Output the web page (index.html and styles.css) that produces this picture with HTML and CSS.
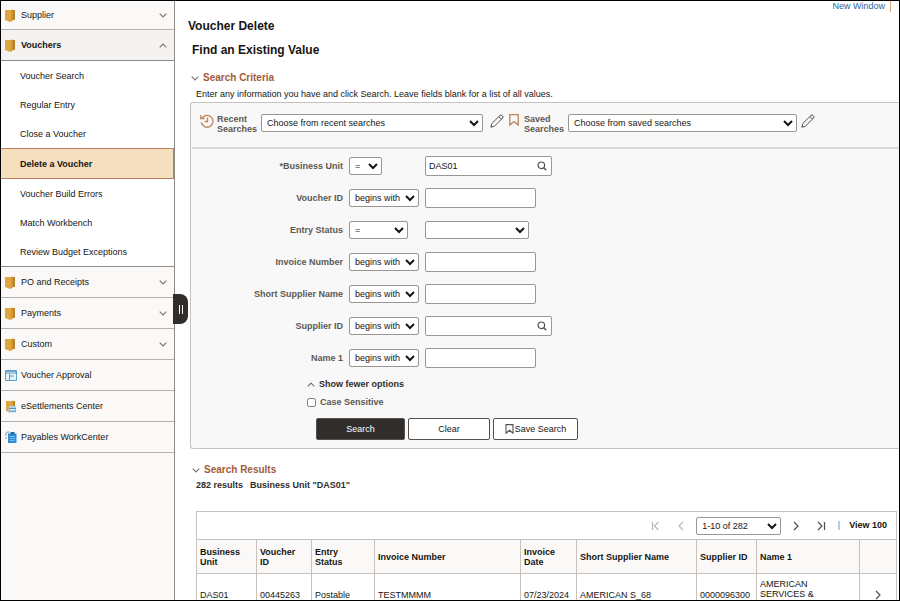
FILE: index.html
```html
<!DOCTYPE html>
<html lang="en">
<head>
  <meta charset="UTF-8">
  <meta name="viewport" content="width=device-width, initial-scale=1.0">
  <title>Voucher Delete</title>
  <link rel="stylesheet" href="styles.css">
</head>
<body>
  <!-- Shared icons -->
  <svg class="sprite" aria-hidden="true">
    <symbol id="folder" viewBox="0 0 10 13">
      <path d="M0 1h10v10H0z" fill="#b9842f"/>
      <path d="M0 1h6.500l1-1v12l-2.500 1-5-2z" fill="#dfa53f"/>
      <path d="M6.500 1l1-.5v11l-1 .5z" fill="#c79039"/>
    </symbol>
    <symbol id="down" viewBox="0 0 8 5">
      <path d="M.7.7L4 4 7.300.7" fill="none" stroke="#777370" stroke-width="1.100"/>
    </symbol>
    <symbol id="up" viewBox="0 0 8 5">
      <path d="M.7 4.300L4 1l3.300 3.300" fill="none" stroke="#777370" stroke-width="1.100"/>
    </symbol>
    <symbol id="pencil" viewBox="0 0 14 14">
      <path d="M.8 13.200l.9-3.500L10 1.400q1-.9 2 0l.6.6q.9 1 0 2L4.300 12.300zM9 2.700l2.300 2.300" fill="none" stroke="#54504d" stroke-width="1" stroke-linejoin="round"/>
    </symbol>
    <symbol id="bookmark" viewBox="0 0 10 12">
      <path d="M.8.7h8.400v10.400L5 7.500.8 11.100z" fill="none" stroke="currentColor" stroke-width="1.300"/>
    </symbol>
    <symbol id="lens" viewBox="0 0 10 10">
      <circle cx="4.300" cy="4.300" r="3.300" fill="none" stroke="#55514e" stroke-width="1.200"/>
      <path d="M6.700 6.700L9.300 9.300" stroke="#55514e" stroke-width="1.400"/>
    </symbol>
  </svg>

  <div class="page">
    <nav class="sidebar">
      <a class="group" href="#"><svg class="folder"><use href="#folder"/></svg>Supplier<svg class="chevron"><use href="#down"/></svg></a>
      <a class="group expanded" href="#"><svg class="folder"><use href="#folder"/></svg>Vouchers<svg class="chevron"><use href="#up"/></svg></a>
      <div class="submenu">
        <a href="#">Voucher Search</a>
        <a href="#">Regular Entry</a>
        <a href="#">Close a Voucher</a>
        <a class="selected" href="#">Delete a Voucher</a>
        <a href="#">Voucher Build Errors</a>
        <a href="#">Match Workbench</a>
        <a href="#">Review Budget Exceptions</a>
      </div>
      <a class="group" href="#"><svg class="folder"><use href="#folder"/></svg>PO and Receipts<svg class="chevron"><use href="#down"/></svg></a>
      <a class="group" href="#"><svg class="folder"><use href="#folder"/></svg>Payments<svg class="chevron"><use href="#down"/></svg></a>
      <a class="group" href="#"><svg class="folder"><use href="#folder"/></svg>Custom<svg class="chevron"><use href="#down"/></svg></a>
      <a class="group" href="#">
        <svg class="app-icon" viewBox="0 0 12 12"><path d="M.5 1h11v10H.5z" fill="#e6f2fa" stroke="#5b9fc9"/><path d="M1 1.500h10V4H1z" fill="#5b9fc9"/><path d="M4.500 4v7M5 6.500h4" stroke="#5b9fc9"/><path d="M1.500 2.700h9" stroke="#d3e8f5" stroke-width=".8"/></svg>
        Voucher Approval</a>
      <a class="group" href="#">
        <svg class="app-icon" viewBox="0 0 12 13"><path d="M1 1h9v10H1z" fill="#b9842f"/><path d="M1 1h6l1-1v11l-3 1.500-4-1.500z" fill="#dfa53f"/><path d="M4 6h7v6.500H3z" fill="#a9d2ea"/><path d="M4 8.500h7M4 11h7" stroke="#4d90bd"/><path d="M5 9.700h5" stroke="#fff"/></svg>
        eSettlements Center</a>
      <a class="group" href="#">
        <svg class="app-icon" viewBox="0 0 12 13"><path d="M3 2.500h8.500V12H3z" fill="#2f8fd6"/><path d="M5.500 1h4v2.500h-4z" fill="#1f6fae"/><path d="M4.800 5.500h5M4.800 7.500h5M4.800 9.500h5" stroke="#8cc6f0" stroke-width=".8"/><path d="M1 5V2.500Q1 1 3 1h1.500M1 6v2" fill="none" stroke="#7a98ab"/></svg>
        Payables WorkCenter</a>
      <button class="handle" type="button" aria-label="Collapse navigation"><span></span><span></span></button>
    </nav>

    <main>
      <div class="top-links"><a href="#">New Window</a></div>
      <h1>Voucher Delete</h1>
      <h2>Find an Existing Value</h2>

      <h3 class="criteria-title"><svg class="chevron"><use href="#down"/></svg>Search Criteria</h3>
      <p class="hint">Enter any information you have and click Search. Leave fields blank for a list of all values.</p>

      <form class="panel">
        <div class="searches">
          <svg class="history" viewBox="0 0 14 14"><path d="M2.200 4A5.900 5.900 0 1 1 1.300 8.500M.8 1v3.500h3.700M7.500 3.500v4H4.700" fill="none" stroke="#c08457" stroke-width="1.300"/></svg>
          <label for="recent">Recent<br>Searches</label>
          <select id="recent" class="recent"><option>Choose from recent searches</option></select>
          <button class="icon-button" type="button" aria-label="Edit recent searches"><svg><use href="#pencil"/></svg></button>
          <svg class="saved-icon"><use href="#bookmark"/></svg>
          <label for="saved">Saved<br>Searches</label>
          <select id="saved" class="saved"><option>Choose from saved searches</option></select>
          <button class="icon-button" type="button" aria-label="Edit saved searches"><svg><use href="#pencil"/></svg></button>
        </div>

        <div class="fields">
          <label for="unit">*Business Unit</label>
          <select class="op-small" aria-label="Business Unit operator"><option>=</option></select>
          <div class="lookup">
            <input id="unit" type="text" value="DAS01">
            <button type="button" aria-label="Look up Business Unit"><svg><use href="#lens"/></svg></button>
          </div>

          <label for="voucher">Voucher ID</label>
          <select aria-label="Voucher ID operator"><option>begins with</option></select>
          <input id="voucher" type="text">

          <label for="status">Entry Status</label>
          <select class="op-medium" aria-label="Entry Status operator"><option>=</option></select>
          <select id="status" class="status"><option></option></select>

          <label for="invoice">Invoice Number</label>
          <select aria-label="Invoice Number operator"><option>begins with</option></select>
          <input id="invoice" type="text">

          <label for="short-name">Short Supplier Name</label>
          <select aria-label="Short Supplier Name operator"><option>begins with</option></select>
          <input id="short-name" type="text">

          <label for="supplier">Supplier ID</label>
          <select aria-label="Supplier ID operator"><option>begins with</option></select>
          <div class="lookup">
            <input id="supplier" type="text">
            <button type="button" aria-label="Look up Supplier ID"><svg><use href="#lens"/></svg></button>
          </div>

          <label for="name1">Name 1</label>
          <select aria-label="Name 1 operator"><option>begins with</option></select>
          <input id="name1" type="text">
        </div>

        <div class="options">
          <a class="fewer" href="#"><svg class="chevron"><use href="#up"/></svg>Show fewer options</a>
          <label class="case"><input type="checkbox">Case Sensitive</label>
        </div>

        <div class="actions">
          <button class="btn primary" type="button">Search</button>
          <button class="btn clear" type="button">Clear</button>
          <button class="btn save" type="button"><svg><use href="#bookmark"/></svg>Save Search</button>
        </div>
      </form>

      <h3 class="results-title"><svg class="chevron"><use href="#down"/></svg>Search Results</h3>
      <p class="summary"><span>282 results</span><span>Business Unit "DAS01"</span></p>

      <div class="results">
        <div class="pager">
          <button type="button" aria-label="First" disabled><svg viewBox="0 0 10 10"><path d="M1.500 1v8M7.500 1l-4 4 4 4"/></svg></button>
          <button type="button" aria-label="Previous" disabled><svg viewBox="0 0 10 10"><path d="M7 1L3 5l4 4"/></svg></button>
          <select aria-label="Rows shown"><option>1-10 of 282</option></select>
          <button type="button" aria-label="Next"><svg viewBox="0 0 10 10"><path d="M3 1l4 4-4 4"/></svg></button>
          <button type="button" aria-label="Last"><svg viewBox="0 0 10 10"><path d="M2 1l4 4-4 4M8.500 1v8"/></svg></button>
          <a href="#">View 100</a>
        </div>
        <table>
          <colgroup>
            <col class="c-unit"><col class="c-voucher"><col class="c-status"><col><col class="c-date">
            <col class="c-short"><col class="c-supplier"><col class="c-name"><col class="c-open">
          </colgroup>
          <thead>
            <tr>
              <th>Business<br>Unit</th>
              <th>Voucher<br>ID</th>
              <th>Entry<br>Status</th>
              <th>Invoice Number</th>
              <th>Invoice<br>Date</th>
              <th>Short Supplier Name</th>
              <th>Supplier ID</th>
              <th>Name 1</th>
              <th></th>
            </tr>
          </thead>
          <tbody>
            <tr>
              <td>DAS01</td>
              <td>00445263</td>
              <td>Postable</td>
              <td>TESTMMMM</td>
              <td>07/23/2024</td>
              <td>AMERICAN S_68</td>
              <td>0000096300</td>
              <td class="name">AMERICAN SERVICES &amp;</td>
              <td class="open"><svg viewBox="0 0 10 10"><path d="M3 1l4 4-4 4"/></svg></td>
            </tr>
          </tbody>
        </table>
      </div>
    </main>
  </div>
</body>
</html>
```
FILE: styles.css
```css
* {
  box-sizing: border-box;
}

body {
  margin: 0;
  font-family: "Liberation Sans", Arial, sans-serif;
  font-size: 9px;
  line-height: 12px;
  color: #161513;
}

a {
  color: inherit;
  text-decoration: none;
}

button,
input,
select {
  font-family: inherit;
  font-size: 9px;
  color: #161513;
}

button {
  padding: 0;
  border: none;
  background: none;
  cursor: pointer;
}

svg {
  display: block;
  flex-shrink: 0;
}

.sprite {
  position: absolute;
  width: 0;
  height: 0;
}

.page {
  display: flex;
  height: 100vh;
  border: 1px solid #000;
  overflow: hidden;
}

/* Sidebar */
.sidebar {
  position: relative;
  flex-shrink: 0;
  width: 174px;
  background-color: #fbf9f8;
  border-right: 1px solid #8f8b88;
}

.group {
  display: flex;
  align-items: center;
  gap: 5px;
  height: 31px;
  padding: 0 7px 0 4px;
  border-bottom: 1px solid #b5b1ae;
}

.group:first-child {
  height: 29px;
}

.group.expanded {
  background-color: #f5f3f2;
  border-color: #8f8b88;
  font-weight: bold;
}

.folder {
  width: 10px;
  height: 13px;
  margin-right: 1px;
}

.app-icon {
  width: 12px;
  height: 13px;
  margin-right: -1px;
}

.chevron {
  width: 8px;
  height: 5px;
}

.group .chevron {
  margin-left: auto;
}

.submenu {
  background-color: #fff;
  border-bottom: 1px solid #8f8b88;
}

.submenu a {
  display: flex;
  align-items: center;
  height: 29px;
  padding-left: 19px;
}

.submenu .selected {
  height: 31px;
  background-color: #f5dfbf;
  border: 1px solid #b9805f;
  border-left: none;
  font-weight: bold;
}

.handle {
  position: absolute;
  top: 293px;
  right: -14px;
  display: flex;
  align-items: center;
  justify-content: center;
  gap: 2px;
  width: 15px;
  height: 30px;
  border-radius: 0 8px 8px 0;
  background-color: #312d2a;
}

.handle span {
  width: 1px;
  height: 9px;
  background-color: #fff;
}

/* Page heading */
main {
  flex: 1;
  min-width: 0;
  padding-left: 13px;
}

.top-links {
  display: flex;
  justify-content: flex-end;
  height: 11px;
  line-height: 11px;
  padding-right: 8px;
  color: #1f66a6;
}

.top-links a {
  padding-right: 5px;
  border-right: 1px solid #d9a773;
}

h1,
h2,
h3,
p {
  margin: 0;
}

h1,
h2 {
  font-size: 12px;
  line-height: 14px;
}

h1 {
  margin-top: 7px;
}

h2 {
  margin: 10px 0 0 4px;
}

h3 {
  display: flex;
  align-items: center;
  gap: 4px;
  font-size: 10px;
  color: #a35a3c;
}

.criteria-title {
  margin: 15px 0 0 3px;
}

.hint {
  margin: 4px 0 2px 8px;
}

/* Search form */
.panel {
  margin-left: 2px;
  border: 1px solid #c6c2bf;
  border-right: none;
  border-radius: 3px 0 0 3px;
  background-color: #f8f8f8;
}

.panel label {
  font-weight: bold;
  color: #5c5855;
}

select,
input[type="text"],
.lookup {
  border: 1px solid #9b9691;
  border-radius: 2px;
  background-color: #fff;
}

select {
  height: 18px;
  padding: 0 0 0 1px;
}

.searches {
  display: flex;
  align-items: flex-start;
  margin-left: 1px;
  padding: 11px 0 13px 8px;
  border-bottom: 2px solid #dad7d4;
  line-height: 10px;
}

.history {
  width: 14px;
  height: 14px;
  margin-right: 3px;
}

.recent {
  width: 222px;
  margin: 0 7px 0 4px;
}

.saved {
  width: 229px;
  margin: 0 4px;
}

.icon-button svg {
  width: 14px;
  height: 14px;
}

.saved-icon {
  width: 10px;
  height: 12px;
  margin: 0 5px;
  color: #c08457;
}

.fields {
  display: grid;
  grid-template-columns: 152px 70px 127px;
  grid-auto-rows: 20px;
  gap: 12px 6px;
  align-items: center;
  padding-top: 7px;
}

.fields label {
  text-align: right;
}

.fields .op-small {
  width: 33px;
}

.fields .op-medium {
  width: 59px;
}

.fields .status {
  width: 104px;
}

.fields input {
  width: 111px;
  height: 20px;
  padding: 0 3px;
}

.lookup {
  display: flex;
  align-items: center;
  height: 20px;
  padding-right: 4px;
}

.lookup input[type="text"] {
  flex: 1;
  min-width: 0;
  height: 18px;
  border: none;
}

.lookup svg {
  width: 10px;
  height: 10px;
}

.options {
  display: flex;
  flex-direction: column;
  align-items: flex-start;
  gap: 6px;
  margin: 10px 0 10px 116px;
}

.fewer,
.case {
  display: flex;
  align-items: center;
  gap: 4px;
}

.fewer {
  font-weight: bold;
  color: #312d2a;
}

.case input {
  width: 9px;
  height: 9px;
  margin: 0;
}

.actions {
  display: flex;
  gap: 3px;
  margin: 0 0 8px 125px;
}

.btn {
  display: flex;
  align-items: center;
  justify-content: center;
  height: 22px;
  border: 1px solid #54504d;
  border-radius: 2px;
  background-color: #fff;
}

.btn.primary {
  width: 89px;
  background-color: #312d2a;
  color: #fff;
}

.btn.clear {
  width: 82px;
}

.btn.save {
  gap: 1px;
  width: 85px;
}

.btn svg {
  width: 9px;
  height: 10px;
  color: #54504d;
}

/* Results */
.results-title {
  margin: 15px 0 0 4px;
}

.summary {
  display: flex;
  gap: 7px;
  margin: 3px 0 20px 8px;
  font-weight: bold;
  color: #312d2a;
}

.results {
  margin: 0 2px 0 8px;
}

.pager {
  display: flex;
  align-items: center;
  justify-content: flex-end;
  gap: 15px;
  height: 28px;
  padding-right: 9px;
  border: 1px solid #c6c2bf;
  border-bottom: none;
}

.pager button:disabled {
  opacity: 0.4;
}

.pager select {
  width: 85px;
  margin: 0 -5px;
}

.pager a {
  margin-left: -3px;
  padding-left: 9px;
  border-left: 2px solid #b3cfe2;
  line-height: 9px;
  font-weight: bold;
}

.results svg {
  width: 10px;
  height: 10px;
  fill: none;
  stroke: #54504d;
  stroke-width: 1.2;
}

table {
  width: 100%;
  table-layout: fixed;
  border-collapse: collapse;
  line-height: 10px;
}

th,
td {
  padding: 0 3px;
  border: 1px solid #c6c2bf;
  text-align: left;
}

th {
  height: 34px;
  background-color: #fbf9f8;
}

td {
  height: 42px;
}

.c-unit {
  width: 60px;
}

.c-voucher {
  width: 55px;
}

.c-status {
  width: 63px;
}

.c-date {
  width: 56px;
}

.c-short {
  width: 120px;
}

.c-supplier {
  width: 60px;
}

.c-name {
  width: 103px;
}

.c-open {
  width: 37px;
}

.name {
  padding: 5px 30px 0 3px;
  vertical-align: top;
}

.open svg {
  margin-left: 10px;
}
```
